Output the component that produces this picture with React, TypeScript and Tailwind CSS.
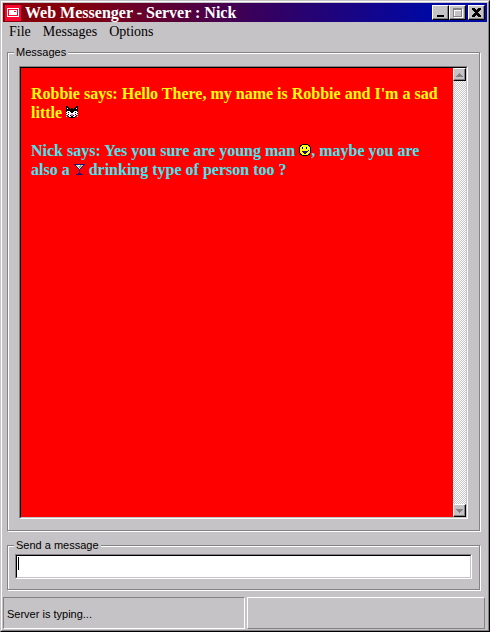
import React from "react";

const PALETTE: Record<string, string> = {
  K: "#000000",
  W: "#ffffff",
  P: "#e060e8",
  Y: "#ffff10",
  B: "#201078",
  G: "#c6c3c6",
  L: "#80b030",
};

const CAT = [
  "KK........KK",
  "KKK......KKK",
  "KWKK.KK.KKWK",
  "KKKKKKKKKKKK",
  "KKKKKKKKKKKK",
  "KWWWKKKKWWWK",
  "WWKWWKKWWKWW",
  "KWWWWWWWWWWK",
  "WWKWWPPWWKWW",
  ".KWWKPPKWWK.",
  "W.KWWKKWWK.W",
  "...KKKKKK...",
];

const SMILE = [
  "...KKKKKK...",
  ".KKYYYYYYKK.",
  ".KYYYYYYYYK.",
  "KYYKYYYKYYYK",
  "KYYKYYYKYYYK",
  "KYYYYYYYYYYK",
  "KYYYYYYYYBYK",
  "KYYBBBBBBYYK",
  "KYYYBBBBYYYK",
  ".KYYYBBYYYK.",
  ".KKYYYYYYKK.",
  "...KKKKKK...",
];

const DRINK = [
  "BBBBBBBBBBB",
  ".BGGWWLGGB.",
  "..BWGLLGB..",
  "...BWLGB...",
  "....BWB....",
  ".....B.....",
  ".....B.....",
  ".....B.....",
  ".....B.....",
  "....BBB....",
  "..BBBBBBB..",
];

function PixelIcon({ rows, label }: { rows: string[]; label: string }) {
  const width = rows[0].length;
  return (
    <svg
      role="img"
      aria-label={label}
      width={width}
      height={rows.length}
      viewBox={`0 0 ${width} ${rows.length}`}
      shapeRendering="crispEdges"
      className="inline-block align-baseline"
    >
      {rows.flatMap((row, y) =>
        row.split("").map((c, x) =>
          c === "." ? null : (
            <rect key={`${x}-${y}`} x={x} y={y} width={1} height={1} fill={PALETTE[c]} />
          ),
        ),
      )}
    </svg>
  );
}

const raised =
  "border border-t-white border-l-white border-r-black border-b-black shadow-[inset_-1px_-1px_0_#848284]";

function CaptionButton({ label, children }: { label: string; children: React.ReactNode }) {
  return (
    <button
      aria-label={label}
      className={`flex h-[15px] w-[17px] items-center justify-center bg-[#c6c3c6] ${raised}`}
    >
      {children}
    </button>
  );
}

function ScrollButton({ label, path }: { label: string; path: string }) {
  return (
    <button
      aria-label={label}
      className={`flex h-[13px] w-[13px] items-center justify-center bg-[#c6c3c6] ${raised}`}
    >
      <svg width="7" height="4" viewBox="0 0 7 4" shapeRendering="crispEdges">
        <path d={path} fill="#848284" />
      </svg>
    </button>
  );
}

const group =
  "mx-[7px] min-w-0 border border-[#848284] shadow-[inset_1px_1px_0_#fff,1px_1px_0_#fff]";
const legend = "bg-[#c6c3c6] px-[2px] text-[11px] leading-[14px]";

export default function App() {
  return (
    <main className="flex h-screen min-h-[320px] w-full flex-col border border-t-[#c6c3c6] border-l-[#c6c3c6] border-r-black border-b-black bg-[#c6c3c6] font-['Liberation_Sans',Arial,sans-serif] text-black">
      <div className="flex min-h-0 flex-1 flex-col border border-t-white border-l-white border-r-[#848284] border-b-[#848284] p-px">
        <header className="flex h-[19px] shrink-0 items-center bg-linear-to-r/srgb from-[#84000c] from-15% via-[#38005c] via-52% to-[#0008a4] to-88% pr-[2px] pl-[2px]">
          <svg width="16" height="16" viewBox="0 0 16 16" shapeRendering="crispEdges" aria-hidden="true">
            <path d="M0 0h16v16H0z" fill="#f80830" />
            <path d="M2 3h12v9H2z" fill="#fff" />
            <path d="M3 4h10v7H3z" fill="#f80830" />
            <path d="M4 5h8v5H4z" fill="#fff" />
            <path d="M9 6h2v1H9z" fill="#f80830" />
          </svg>
          <h1 className="ml-1 flex-1 truncate font-['Liberation_Serif','Times_New_Roman',serif] text-[16px] leading-[19px] font-bold text-white">
            Web Messenger - Server : Nick
          </h1>
          <CaptionButton label="Minimize">
            <svg width="11" height="11" viewBox="0 0 11 11" shapeRendering="crispEdges">
              <path d="M2 8h7v2H2z" />
            </svg>
          </CaptionButton>
          <CaptionButton label="Maximize">
            <svg width="11" height="11" viewBox="0 0 11 11" shapeRendering="crispEdges" fill="none">
              <path d="M2 2h9v9H2z" fill="#fff" />
              <path d="M1 1h9v9H1z" fill="#848284" />
              <path d="M2 3h7v6H2z" fill="#c6c3c6" />
              <path d="M2 3h7v1H3v5H2z" fill="#fff" />
            </svg>
          </CaptionButton>
          <div className="ml-[2px]">
            <CaptionButton label="Close">
              <svg width="9" height="9" viewBox="0 0 9 9" shapeRendering="crispEdges">
                <path d="M0 0h3v1h1v1h1V1h1V0h3v2H8v1H7v1H6v1h1v1h1v1h1v2H6V8H5V7H4v1H3v1H0V7h1V6h1V5h1V4H2V3H1V2H0z" />
              </svg>
            </CaptionButton>
          </div>
        </header>

        <nav className="flex h-5 shrink-0 items-center gap-3 pl-[6px] font-['Liberation_Serif','Times_New_Roman',serif] text-[14px] leading-5">
          <button>File</button>
          <button>Messages</button>
          <button>Options</button>
        </nav>

        <div className="mt-[3px] -mx-px flex min-h-0 flex-1 flex-col pr-[1px]">
          <fieldset className={`${group} ml-[5px] flex min-h-0 flex-1 flex-col px-[11px] pt-[7px] pb-[11px]`}>
            <legend className={`-ml-[5px] ${legend}`}>Messages</legend>
            <div className="flex h-full min-h-0 flex-1 border border-t-[#848284] border-l-[#848284] border-r-white border-b-white">
              <div className="flex min-w-0 flex-1 border border-t-black border-l-black border-r-[#c6c3c6] border-b-[#c6c3c6]">
                <div className="min-w-0 flex-1 overflow-hidden bg-[#ff0000] px-[10px] pt-4 font-['Liberation_Serif','Times_New_Roman',serif] text-[16px] leading-[19px] font-bold">
                  <p className="mb-[19px] text-[#ffff10]">
                    Robbie says: Hello There, my name is Robbie and I'm a sad little{" "}
                    <PixelIcon rows={CAT} label="cat" />
                  </p>
                  <p className="text-[#40e8f0]">
                    Nick says: Yes you sure are young man <PixelIcon rows={SMILE} label="smile" />, maybe you are{" "}
                    <span>
                      also a <PixelIcon rows={DRINK} label="drink" /> drinking type of person too ?
                    </span>
                  </p>
                </div>
                <div className="flex w-[13px] shrink-0 flex-col justify-between bg-[repeating-conic-gradient(#fff_0_25%,#c6c3c6_0_50%)] bg-size-[2px_2px]">
                  <ScrollButton label="Scroll up" path="M3 0h1v1h1v1h1v1h1v1H0V3h1V2h1V1h1z" />
                  <ScrollButton label="Scroll down" path="M0 0h7v1H6v1H5v1H4v1H3V3H2V2H1V1H0z" />
                </div>
              </div>
            </div>
          </fieldset>

          <fieldset className={`${group} mt-[7px] ml-[5px] shrink-0 px-[7px] pt-[2px] pb-[10px]`}>
            <legend className={`-ml-px ${legend}`}>
              <label htmlFor="message">Send a message</label>
            </legend>
            <div className="relative border border-t-[#848284] border-l-[#848284] border-r-white border-b-white">
              <input
                id="message"
                type="text"
                className="block h-[23px] w-full border border-t-black border-l-black border-r-[#c6c3c6] border-b-[#c6c3c6] bg-white px-1 text-[12px] outline-none"
              />
              <span className="pointer-events-none absolute top-[2px] left-[2px] h-[13px] w-px bg-black" />
            </div>
          </fieldset>
        </div>

        <footer className="mt-[7px] mr-[2px] flex h-8 shrink-0 gap-[2px] text-[11px] leading-8">
          <div className="flex-1 border border-t-[#848284] border-l-[#848284] border-r-white border-b-white pl-[3px]">
            Server is typing...
          </div>
          <div className="flex-1 border border-t-white border-l-white border-r-[#848284] border-b-[#848284]" />
        </footer>
      </div>
    </main>
  );
}
